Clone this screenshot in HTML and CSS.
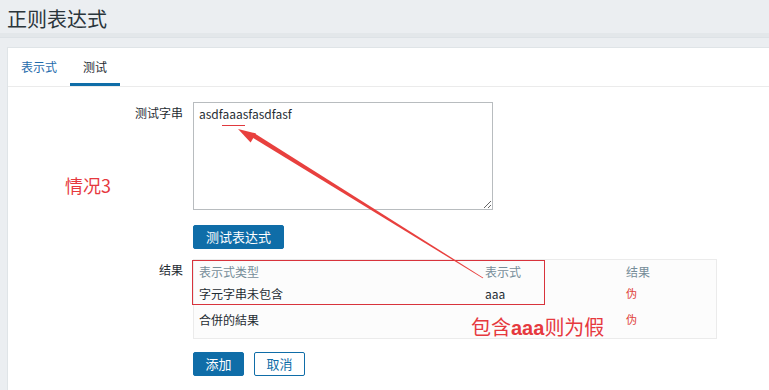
FILE: index.html
```html
<!DOCTYPE html>
<html lang="zh">
<head>
<meta charset="utf-8">
<title>正则表达式</title>
<link rel="stylesheet" href="styles.css">
</head>
<body>
<div class="header"><h1 class="title">正则表达式</h1></div>
<div class="wrap">
  <div class="panel">
    <div class="tabs">
      <span class="tab">表示式</span>
      <span class="tab active">测试</span>
    </div>
    <div class="form">
      <div class="row">
        <div class="label">测试字串</div>
        <div class="field"><textarea class="area">asdfaaasfasdfasf</textarea></div>
      </div>
      <div class="row row-btn">
        <div class="label"></div>
        <div class="field"><button class="btn">测试表达式</button></div>
      </div>
      <div class="row row-result">
        <div class="label label-result">结果</div>
        <div class="field">
          <div class="results">
            <div class="r-row r-head"><span class="c1">表示式类型</span><span class="c2">表示式</span><span class="c3">结果</span></div>
            <div class="r-row"><span class="c1">字元字串未包含</span><span class="c2">aaa</span><span class="c3 false">伪</span></div>
            <div class="r-row r-total"><span class="c1">合併的結果</span><span class="c2"></span><span class="c3 false">伪</span></div>
          </div>
        </div>
      </div>
      <div class="row row-actions">
        <div class="label"></div>
        <div class="field actions"><button class="btn btn-sm">添加</button><button class="btn btn-sm btn-alt">取消</button></div>
      </div>
    </div>
  </div>
</div>

<div class="note note-case">情况3</div>
<div class="note note-false">包含<b>aaa</b>则为假</div>
<div class="mark-box"></div>
<div class="mark-line"></div>
<svg class="arrow" width="769" height="390" viewBox="0 0 769 390">
  <polygon points="483.3,277.7 482.7,278.3 251.2,136.7 253.6,132.7" fill="#e8403e"/>
  <polygon points="238,129 256,133.5 250.6,142.6" fill="#e8403e"/>
</svg>
</body>
</html>
```
FILE: styles.css
```css
* { box-sizing: border-box; }
html, body { margin: 0; padding: 0; }
body {
  width: 769px;
  height: 390px;
  overflow: hidden;
  background: #ebeef1;
  font-family: "Noto Sans CJK SC", "Noto Sans", Arial, sans-serif;
  font-size: 12px;
  color: #1f2c33;
  position: relative;
}
.header {
  height: 38px;
  padding: 0 0 0 7px;
  border-bottom: 1px solid #dde2e6;
  box-shadow: 0 -4px 0 #e3e7ea inset;
}
.title {
  margin: 0;
  font-size: 20px;
  font-weight: normal;
  line-height: 38px;
  color: #2a353b;
}
.wrap {
  padding: 9px 0 0 7px;
}
.panel {
  background: #fff;
  border: 1px solid #dfe4e7;
  border-right: 0;
  border-bottom: 0;
  height: 360px;
}
.tabs {
  display: flex;
  height: 39px;
  border-bottom: 1px solid #ebebeb;
}
.tab {
  padding: 11px 13px 0;
  line-height: 16px;
  color: #1f2c33;
  border-bottom: 3px solid transparent;
}
.tab:first-child { color: #1f6bac; }
.tab.active { border-bottom-color: #0f6da8; }
.form {
  padding-top: 15px;
  display: flex;
  flex-direction: column;
}
.row {
  display: flex;
  gap: 10px;
}
.label {
  width: 175px;
  flex: none;
  text-align: right;
  padding-top: 3px;
  line-height: 16px;
}
.area {
  display: block;
  width: 300px;
  height: 108px;
  margin: 0;
  padding: 3px 5px;
  border: 1px solid #b8bcbf;
  font-family: inherit;
  font-size: 12px;
  line-height: 16px;
  color: #1f2c33;
  resize: both;
}
.row-btn { margin-top: 15px; }
.btn {
  height: 24px;
  padding: 0 12px;
  border: 1px solid #0f6da8;
  border-radius: 2px;
  background: #0f6da8;
  color: #fff;
  font-family: inherit;
  font-size: 13px;
  line-height: 22px;
  cursor: pointer;
}
.btn-sm { padding: 0 11px; width: 51px; }
.btn-alt {
  background: #fff;
  color: #0f6da8;
}
.row-result { margin-top: 10px; }
.label-result { padding-top: 3px; }
.results {
  width: 524px;
  height: 80px;
  border: 1px solid #ebebeb;
  background: #fcfcfc;
}
.r-row {
  display: grid;
  grid-template-columns: 286px 141px 1fr;
  height: 22px;
  align-items: center;
  padding-left: 5px;
}
.r-head { color: #768d99; }
.r-total { height: 30px; }
.false { color: #e0433b; font-size: 11px; }
.actions { display: flex; gap: 10px; }
.row-actions { margin-top: 13px; }

.note {
  position: absolute;
  color: #e6393e;
  white-space: nowrap;
}
.note-case {
  left: 65px;
  top: 174px;
  font-size: 18px;
  line-height: 22px;
}
.note-false {
  left: 471px;
  top: 314px;
  font-size: 20px;
  line-height: 26px;
}
.note-false b { font-family: "Liberation Sans", Arial, sans-serif; }
.mark-box {
  position: absolute;
  left: 192px;
  top: 260px;
  width: 353px;
  height: 45px;
  border: 1px solid #d8333c;
}
.mark-line {
  position: absolute;
  left: 222px;
  top: 125px;
  width: 23px;
  height: 1px;
  background: #e0393e;
}
.arrow {
  position: absolute;
  left: 0;
  top: 0;
  pointer-events: none;
}
```
